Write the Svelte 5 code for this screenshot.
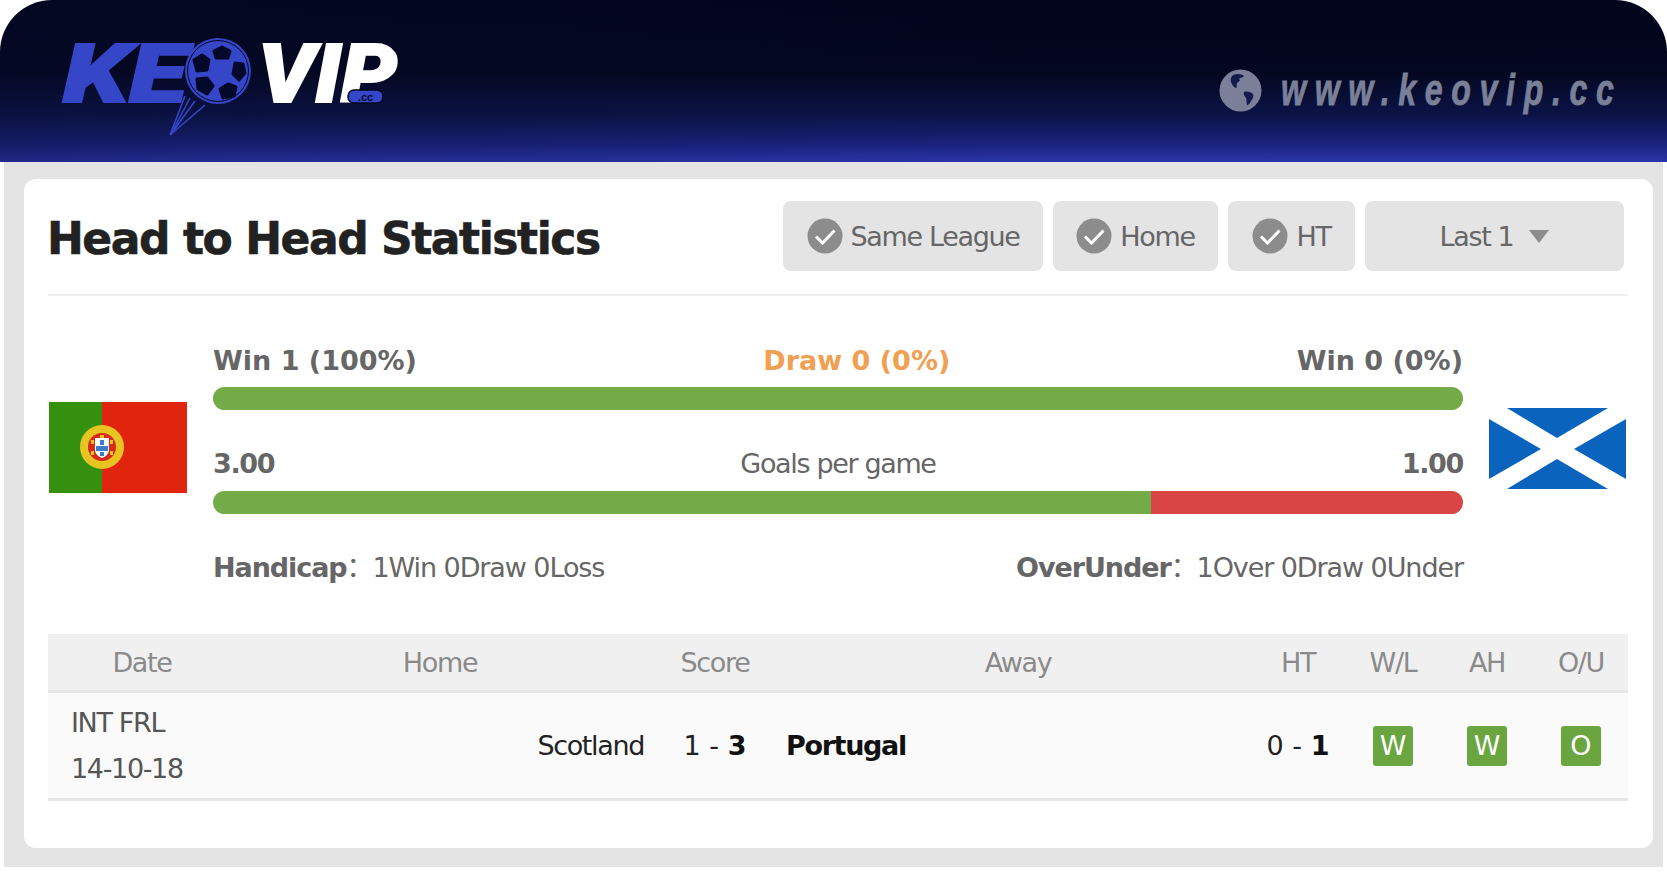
<script>
  const filters = [
    { label: 'Same League', cls: 'f-league' },
    { label: 'Home', cls: 'f-home' },
    { label: 'HT', cls: 'f-ht' }
  ];
  const heads = ['Date', 'Home', 'Score', 'Away', 'HT', 'W/L', 'AH', 'O/U'];
</script>

<div class="page">
  <header class="banner">
    <svg class="logo" width="360" height="130" viewBox="0 0 360 130">
      <text class="lg blue" x="0" y="60" font-size="82" textLength="124" lengthAdjust="spacingAndGlyphs">KE</text>
      <g stroke="#3546c8" stroke-width="1.6">
        <line x1="122" y1="54" x2="107" y2="93" />
        <line x1="127" y1="56" x2="108" y2="92" />
        <line x1="132" y1="59" x2="108" y2="92" />
        <line x1="142" y1="63" x2="107" y2="93" />
      </g>
      <circle cx="155" cy="29" r="33" fill="#3546c8" />
      <circle cx="155" cy="29" r="30.500" fill="none" stroke="#03071f" stroke-width="1" />
      <g fill="#04082a" stroke="#04082a" stroke-width="3" stroke-linejoin="round">
        <polygon points="151,9 159,5 167,9 165,16 153,16" />
        <polygon points="131,18 139,13 146,18 144,28 134,29" />
        <polygon points="172,21 180,22 182,31 176,38 170,32" />
        <polygon points="134,37 144,36 150,44 144,52 135,47" />
        <polygon points="157,47 165,42 173,45 171,54 160,56" />
      </g>
      <text class="lg white" x="195" y="60" font-size="82" textLength="139" lengthAdjust="spacingAndGlyphs">VIP</text>
      <rect x="285" y="48" width="35" height="13" rx="6" fill="#3546c8" stroke="#03071f" stroke-width="1.500" />
      <text class="cc" x="302.500" y="58.500" text-anchor="middle">.cc</text>
    </svg>

    <div class="site">
      <svg width="43" height="43" viewBox="0 0 43 43">
        <circle cx="21.500" cy="21.500" r="21" fill="#7b8099" />
        <path d="M14 6c4-2 9-1 11 1-1 2-4 1-5 3 2 1 0 3-2 4-1 2 1 4-1 5-3-1-4-4-5-6-1-3 0-5 2-7z" fill="#141b4e" />
        <path d="M25 23c3-1 7 0 9 2 1 2 0 5-2 7-1 2-2 4-4 4-1-3 0-5-1-7-1-2-3-3-2-6z" fill="#141b4e" />
      </svg>
      <svg class="site-text" width="334" height="60" viewBox="0 0 334 60">
        <g transform="scale(0.73 1)">
          <text x="0" y="45" textLength="456" lengthAdjust="spacing">www.keovip.cc</text>
        </g>
      </svg>
    </div>
  </header>

  <main class="shell">
    <section class="card">
      <div class="top">
        <h1>Head to Head Statistics</h1>
        <div class="filters">
          {#each filters as f}
            <button class={f.cls}>
              <svg width="36" height="36" viewBox="0 0 36 36">
                <circle cx="18" cy="18" r="17.500" fill="#8c8c8c" />
                <path d="M9 18.500l6.500 6.500 12-12.500" fill="none" stroke="#fff" stroke-width="3" />
              </svg>
              {f.label}
            </button>
          {/each}
          <button class="f-last">Last 1 <span class="caret"></span></button>
        </div>
      </div>

      <div class="stats">
        <svg class="flag pt" width="138" height="91" viewBox="0 0 138 91">
          <rect width="138" height="91" fill="#e1240e" />
          <rect width="53" height="91" fill="#36900f" />
          <circle cx="53" cy="45" r="22" fill="#e8c422" />
          <circle cx="53" cy="45" r="14" fill="#d8281a" />
          <g fill="#e8c422">
            <rect x="51" y="33" width="4" height="3" /><rect x="42" y="38" width="3" height="4" />
            <rect x="61" y="38" width="3" height="4" /><rect x="42" y="49" width="3" height="4" />
            <rect x="61" y="49" width="3" height="4" />
          </g>
          <path d="M46 36h14v12c0 4-4 7-7 8-3-1-7-4-7-8z" fill="#fff" />
          <g fill="#3a7fc4">
            <rect x="51" y="38" width="4" height="5" /><rect x="47" y="44" width="4" height="5" />
            <rect x="51" y="44" width="4" height="5" /><rect x="55" y="44" width="4" height="5" />
            <rect x="51" y="50" width="4" height="4" />
          </g>
        </svg>

        <div class="middle">
          <div class="label-row wins">
            <b>Win 1 (100%)</b>
            <b class="draw">Draw 0 (0%)</b>
            <b>Win 0 (0%)</b>
          </div>
          <div class="bar"><span class="green full"></span></div>
          <div class="label-row goals">
            <b>3.00</b>
            <span>Goals per game</span>
            <b>1.00</b>
          </div>
          <div class="bar"><span class="green part"></span><span class="red"></span></div>
          <div class="label-row summary">
            <span><b>Handicap</b>：1Win 0Draw 0Loss</span>
            <span><b>OverUnder</b>：1Over 0Draw 0Under</span>
          </div>
        </div>

        <svg class="flag sc" width="137" height="81" viewBox="0 0 137 81">
          <g fill="#0a63bd">
            <polygon points="18,0 119,0 68,30" />
            <polygon points="0,11 52,41 0,71" />
            <polygon points="137,11 85,41 137,71" />
            <polygon points="18,81 119,81 68,51" />
          </g>
        </svg>
      </div>

      <div class="table">
        <div class="tr thead">
          {#each heads as h}<div>{h}</div>{/each}
        </div>
        <div class="tr tbody">
          <div class="date"><div>INT FRL</div><div>14-10-18</div></div>
          <div class="home">Scotland</div>
          <div class="score">1 - <b>3</b></div>
          <div class="away"><b>Portugal</b></div>
          <div class="score">0 - <b>1</b></div>
          <div><span class="badge">W</span></div>
          <div><span class="badge">W</span></div>
          <div><span class="badge">O</span></div>
        </div>
      </div>
    </section>
  </main>
</div>

<style>
  :global(body) {
    margin: 0;
    background: #fff;
  }
  .page {
    width: 1667px;
    height: 872px;
    font-family: "DejaVu Sans", "Noto Sans CJK SC", sans-serif;
    color: #666;
    font-size: 27px;
    letter-spacing: -0.05em;
  }
  .banner {
    height: 162px;
    box-sizing: border-box;
    border-radius: 52px 52px 0 0;
    background:
      linear-gradient(to right, rgba(8, 12, 50, 0.28), rgba(8, 12, 50, 0) 60%),
      linear-gradient(to bottom, #02051c 0%, #03071f 45%, #0c1448 72%, #1a2480 90%, #2a35aa 100%);
    display: flex;
    justify-content: space-between;
    align-items: flex-start;
    padding: 42px 52px 0 63px;
  }
  .logo {
    overflow: visible;
  }
  .lg {
    font-family: "Roboto", "Liberation Sans", sans-serif;
    font-weight: 900;
    font-style: italic;
    letter-spacing: 0;
  }
  .blue {
    fill: #3546c8;
    stroke: #3546c8;
    stroke-width: 2;
  }
  .white {
    fill: #fff;
    stroke: #fff;
    stroke-width: 2;
  }
  .cc {
    font-family: "Liberation Sans", sans-serif;
    font-size: 11px;
    font-weight: 700;
    fill: #04082a;
    letter-spacing: 0;
  }
  .site {
    display: flex;
    align-items: center;
    gap: 19px;
    margin-top: 18px;
  }
  .site-text {
    overflow: visible;
  }
  .site-text text {
    font-family: "Liberation Sans", sans-serif;
    font-size: 44px;
    font-weight: 700;
    font-style: italic;
    fill: #7b8099;
    stroke: #7b8099;
    stroke-width: 0.8;
    letter-spacing: 0;
  }
  .shell {
    margin: 0 4px;
    height: 705px;
    box-sizing: border-box;
    background: #e4e4e4;
    padding: 17px 10px 19px 20px;
  }
  .card {
    height: 669px;
    box-sizing: border-box;
    background: #fff;
    border-radius: 12px;
    padding: 22px 25px 0 24px;
  }
  .top {
    display: flex;
    justify-content: space-between;
    align-items: center;
    height: 95px;
    box-sizing: border-box;
    padding-bottom: 23px;
    border-bottom: 2px solid #f0f0f0;
  }
  h1 {
    margin: 4px 0 0 -1px;
    font-size: 44px;
    font-weight: 700;
    color: #222;
    letter-spacing: -0.033em;
    -webkit-text-stroke: 0.6px #222;
  }
  .filters {
    display: flex;
    gap: 10px;
    margin-right: 4px;
  }
  button {
    height: 70px;
    border: 0;
    border-radius: 8px;
    background: #e4e4e4;
    color: #666;
    font: inherit;
    letter-spacing: inherit;
    display: flex;
    align-items: center;
    justify-content: center;
    gap: 8px;
    padding: 0;
  }
  .f-league { width: 260px; }
  .f-home { width: 165px; }
  .f-ht { width: 127px; }
  .f-last { width: 259px; gap: 16px; }
  .caret {
    width: 0;
    height: 0;
    border-left: 10px solid transparent;
    border-right: 10px solid transparent;
    border-top: 13px solid #8c8c8c;
  }
  .stats {
    display: flex;
    align-items: flex-start;
    justify-content: space-between;
    padding-left: 1px;
    height: 338px;
  }
  .flag {
    flex: none;
  }
  .pt { margin-top: 106px; }
  .sc { margin-top: 112px; margin-right: 2px; }
  .middle {
    width: 1250px;
    margin-top: 44px;
  }
  .label-row {
    display: flex;
    justify-content: space-between;
    align-items: center;
    height: 40px;
  }
  .wins {
    margin-bottom: 7px;
    letter-spacing: 0;
  }
  .goals {
    margin-top: 33px;
    margin-bottom: 8px;
  }
  .summary {
    margin-top: 31px;
    letter-spacing: -0.04em;
  }
  .draw {
    color: #f0a050;
  }
  .bar {
    display: flex;
    height: 23px;
    border-radius: 12px;
    overflow: hidden;
  }
  .green {
    background: #72ab48;
  }
  .full { width: 100%; }
  .part { width: 75%; }
  .red {
    flex: 1;
    background: #d94545;
  }
  .tr {
    display: grid;
    grid-template-columns: 188px 408px 142px 464px 96px 94px 94px 94px;
    align-items: center;
    text-align: center;
  }
  .thead {
    height: 56px;
    background: #f0f0f0;
    border-bottom: 3px solid #e6e6e6;
    color: #8a8a8a;
  }
  .tbody {
    height: 105px;
    background: #fafafa;
    border-bottom: 3px solid #e6e6e6;
    color: #222;
  }
  .tbody b {
    color: #111;
  }
  .score {
    letter-spacing: 0;
  }
  .date {
    text-align: left;
    padding-left: 23px;
    color: #555;
    line-height: 46px;
  }
  .home {
    text-align: right;
  }
  .away {
    text-align: left;
    padding-left: 0;
  }
  .badge {
    display: inline-flex;
    align-items: center;
    justify-content: center;
    width: 40px;
    height: 40px;
    border-radius: 3px;
    background: #6aa53f;
    color: #fff;
    letter-spacing: 0;
    vertical-align: middle;
  }
</style>
